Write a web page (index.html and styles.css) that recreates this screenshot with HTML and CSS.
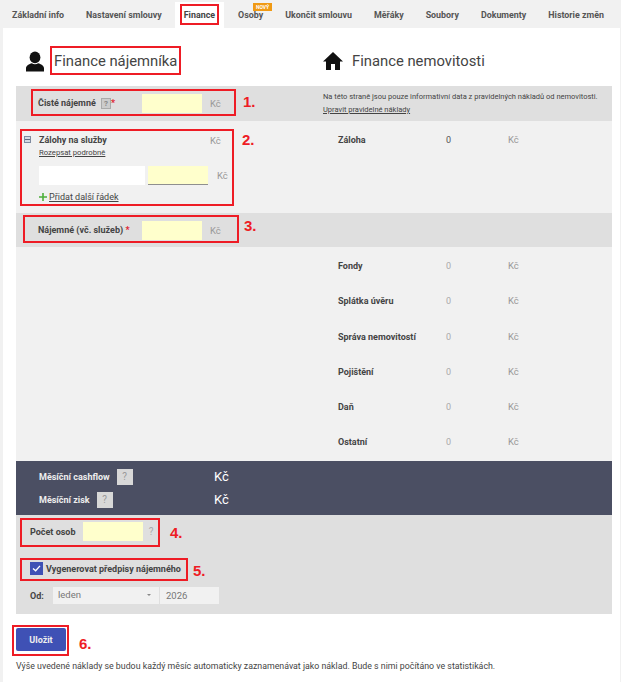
FILE: index.html
```html
<!DOCTYPE html>
<html lang="cs">
<head>
  <meta charset="UTF-8">
  <title>Finance</title>
  <link rel="stylesheet" href="styles.css">
</head>
<body>
  <!-- Tabs -->
  <nav class="tabs">
    <a class="tab" href="#">Základní info</a>
    <a class="tab" href="#">Nastavení smlouvy</a>
    <a class="tab active" href="#">Finance</a>
    <a class="tab" href="#">Osoby<span class="new-badge">NOVÝ</span></a>
    <a class="tab" href="#">Ukončit smlouvu</a>
    <a class="tab" href="#">Měřáky</a>
    <a class="tab" href="#">Soubory</a>
    <a class="tab" href="#">Dokumenty</a>
    <a class="tab" href="#">Historie změn</a>
  </nav>

  <main class="content">
    <!-- Headings -->
    <div class="headings">
      <h2 class="heading">
        <svg class="heading-icon" viewBox="0 0 20 22" width="18" height="21"><ellipse cx="10" cy="6.500" rx="6" ry="6.500" fill="#111"/><path d="M0 22v-3.500c0-3 3.500-4.500 6.500-5.500 2 1.500 5 1.500 7 0 3 1 6.500 2.500 6.500 5.500V22z" fill="#111"/></svg>
        Finance nájemníka
      </h2>
      <h2 class="heading">
        <svg class="heading-icon" viewBox="0 0 20 18" width="20" height="18"><path d="M10 0 0 9.500h3V18h5v-6h4v6h5V9.500h3z" fill="#111"/></svg>
        Finance nemovitosti
      </h2>
    </div>

    <div class="panel">
      <!-- Net rent -->
      <div class="row gray row-net">
        <div class="col">
          <span class="label">Čisté nájemné <span class="hint-small">?</span><span class="req">*</span></span>
          <input class="field" type="text">
          <span class="unit">Kč</span>
        </div>
        <div class="col note">
          <p>Na této straně jsou pouze informativní data z pravidelných nákladů od nemovitosti.</p>
          <a href="#">Upravit pravidelné náklady</a>
        </div>
      </div>

      <!-- Service advances -->
      <div class="row row-advance">
        <div class="col-stack">
          <div class="advance-head">
            <span class="collapse"></span>
            <div class="advance-title">
              <span class="label">Zálohy na služby</span>
              <a class="sub-link" href="#">Rozepsat podrobně</a>
            </div>
            <span class="unit">Kč</span>
          </div>
          <div class="advance-line">
            <input class="field-name" type="text">
            <input class="field field-lined" type="text">
            <span class="unit">Kč</span>
          </div>
          <div class="add-line">
            <svg viewBox="0 0 9 9" width="8" height="8"><path d="M3.600 0h1.800v3.600H9v1.800H5.400V9H3.600V5.400H0V3.600h3.600z" fill="#4caf3a"/></svg>
            <a href="#">Přidat další řádek</a>
          </div>
        </div>
        <div class="cost cost-first">
          <span class="cost-name">Záloha</span>
          <span class="cost-value dark">0</span>
          <span class="unit">Kč</span>
        </div>
      </div>

      <!-- Rent total -->
      <div class="row gray row-total">
        <div class="col">
          <span class="label">Nájemné (vč. služeb)<span class="req"> *</span></span>
          <input class="field" type="text">
          <span class="unit">Kč</span>
        </div>
      </div>

      <!-- Property costs -->
      <div class="costs">
        <div class="cost"><span class="cost-name">Fondy</span><span class="cost-value">0</span><span class="unit">Kč</span></div>
        <div class="cost"><span class="cost-name">Splátka úvěru</span><span class="cost-value">0</span><span class="unit">Kč</span></div>
        <div class="cost"><span class="cost-name">Správa nemovitostí</span><span class="cost-value">0</span><span class="unit">Kč</span></div>
        <div class="cost"><span class="cost-name">Pojištění</span><span class="cost-value">0</span><span class="unit">Kč</span></div>
        <div class="cost"><span class="cost-name">Daň</span><span class="cost-value">0</span><span class="unit">Kč</span></div>
        <div class="cost"><span class="cost-name">Ostatní</span><span class="cost-value">0</span><span class="unit">Kč</span></div>
      </div>

      <!-- Summary -->
      <div class="summary">
        <div class="summary-line"><span class="summary-label">Měsíční cashflow</span><span class="hint-box">?</span><span class="summary-unit">Kč</span></div>
        <div class="summary-line"><span class="summary-label">Měsíční zisk</span><span class="hint-box">?</span><span class="summary-unit">Kč</span></div>
      </div>

      <!-- Options -->
      <div class="options">
        <div class="persons">
          <span class="label">Počet osob</span>
          <input class="field" type="text">
          <span class="hint-plain">?</span>
        </div>
        <label class="check-line">
          <span class="check"><svg viewBox="0 0 10 8" width="9" height="7"><path d="M1 4l3 2.500L9 1" fill="none" stroke="#fff" stroke-width="1.600"/></svg></span>
          Vygenerovat předpisy nájemného
        </label>
        <div class="from-line">
          <span class="label">Od:</span>
          <span class="select">leden<i class="caret"></i></span>
          <span class="year">2026</span>
        </div>
      </div>
    </div>

    <button class="save" type="button">Uložit</button>
    <p class="footnote">Výše uvedené náklady se budou každý měsíc automaticky zaznamenávat jako náklad. Bude s nimi počítáno ve statistikách.</p>
  </main>

  <!-- Red annotations drawn over the screenshot -->
  <div class="mark" style="left:180px;top:4px;width:39px;height:21px"></div>
  <div class="mark" style="left:50px;top:46px;width:131px;height:29px"></div>
  <div class="mark" style="left:31px;top:89px;width:205px;height:27px"></div>
  <div class="mark" style="left:20px;top:129px;width:214px;height:77px"></div>
  <div class="mark" style="left:23px;top:215px;width:216px;height:28px"></div>
  <div class="mark" style="left:20px;top:518px;width:140px;height:29px"></div>
  <div class="mark" style="left:20px;top:558px;width:168px;height:23px"></div>
  <div class="mark" style="left:12px;top:625px;width:57px;height:31px"></div>
  <span class="mark-num" style="left:243px;top:94px">1.</span>
  <span class="mark-num" style="left:242px;top:132px">2.</span>
  <span class="mark-num" style="left:244px;top:218px">3.</span>
  <span class="mark-num" style="left:170px;top:525px">4.</span>
  <span class="mark-num" style="left:193px;top:563px">5.</span>
  <span class="mark-num" style="left:79px;top:636px">6.</span>
</body>
</html>
```

FILE: styles.css
```css
/* General */
html, body {
  margin: 0;
  padding: 0;
}

body {
  position: relative;
  height: 682px;
  overflow: hidden;
  background: #f1f1f1;
  font-family: Roboto, sans-serif;
  font-size: 9px;
  color: #444;
}

a {
  color: inherit;
}

input {
  box-sizing: border-box;
  margin: 0;
  border: none;
  border-radius: 0;
  outline: none;
}

/* Tabs */
.tabs {
  display: flex;
  height: 28px;
  padding-left: 1px;
}

.tab {
  position: relative;
  padding: 0 11px;
  margin-top: 2px;
  line-height: 26px;
  font-size: 8.900px;
  font-weight: 700;
  color: #555;
  text-decoration: none;
  white-space: nowrap;
}

.tab.active {
  margin-left: 2px;
  margin-right: 3px;
  padding: 0 9px;
  background: #fff;
  color: #444;
}

.new-badge {
  position: absolute;
  left: 26px;
  top: 1px;
  width: 19px;
  height: 8px;
  background: #f09a14;
  color: #fff;
  font-size: 5px;
  line-height: 8px;
  text-align: center;
}

/* Content */
.content {
  margin: 0 1px 0 3px;
  height: 654px;
  padding: 0 8px 0 13px;
  background: #fff;
}

.headings {
  display: flex;
  height: 58px;
}

.heading {
  display: flex;
  align-items: center;
  width: 298px;
  margin: 0;
  padding: 8px 0 0 10px;
  box-sizing: border-box;
  font-size: 14.800px;
  font-weight: 400;
  color: #444;
  gap: 10px;
}

.heading + .heading {
  padding-left: 9px;
  gap: 9px;
}

.heading-icon {
  flex: none;
}

/* Panel */
.panel {
  background: #f1f1f1;
}

.row {
  display: flex;
}

.gray {
  background: #dfdfdf;
}

.row-net {
  height: 35px;
}

.row-total {
  height: 34px;
}

.row-advance {
  height: 92px;
}

.col {
  display: flex;
  align-items: center;
  width: 307px;
  padding-left: 22px;
  box-sizing: border-box;
}

.label {
  font-weight: 700;
  color: #444;
}

.col .label {
  width: 104px;
  flex: none;
}

.req {
  color: #e0202e;
}

.hint-small {
  display: inline-block;
  width: 8px;
  height: 9px;
  margin: 0 0 0 3px;
  border: 1px solid #aaa;
  background: #ccc;
  color: #888;
  font-size: 8px;
  line-height: 9px;
  text-align: center;
  vertical-align: middle;
}

.field {
  width: 60px;
  height: 19px;
  background: #ffffcc;
  flex: none;
}

.unit {
  color: #999;
  font-size: 9.500px;
}

.col .unit {
  margin-left: 8px;
}

/* Advances */
.col-stack {
  width: 307px;
  padding: 14px 0 0 8px;
  box-sizing: border-box;
}

.advance-head {
  display: flex;
  align-items: flex-start;
}

.collapse {
  width: 7px;
  height: 7px;
  margin: 1px 8px 0 0;
  border: 1px solid #7f8ba0;
  background: linear-gradient(#5f6b80, #5f6b80) center / 5px 1px no-repeat, #d4dae3;
  box-sizing: border-box;
}

.advance-title {
  width: 171px;
}

.sub-link {
  display: block;
  margin-top: 3px;
  font-size: 7.700px;
}

.advance-line {
  display: flex;
  align-items: center;
  margin: 9px 0 0 15px;
}

.field-name {
  width: 106px;
  height: 19px;
  margin-right: 3px;
  background: #fff;
}

.field-lined {
  border-bottom: 1px solid #8f8f8f;
}

.advance-line .unit {
  margin-left: 9px;
}

.add-line {
  display: flex;
  align-items: center;
  gap: 2px;
  margin: 7px 0 0 15px;
  font-size: 9px;
}

/* Costs */
.costs {
  height: 214px;
  padding-top: 14px;
  box-sizing: border-box;
}

.cost {
  display: flex;
  align-items: flex-start;
  height: 35.300px;
  padding-left: 322px;
  box-sizing: border-box;
}

.cost .unit {
  margin-top: -1px;
}

.cost-first {
  padding: 14px 0 0 15px;
}

.cost-name {
  width: 108px;
  flex: none;
  font-weight: 700;
  color: #444;
}

.cost-value {
  width: 62px;
  flex: none;
  color: #aaa;
}

.cost-value.dark {
  color: #555;
}

/* Summary */
.summary {
  display: flex;
  flex-direction: column;
  justify-content: center;
  gap: 7px;
  height: 54px;
  padding-left: 23px;
  box-sizing: border-box;
  background: #4b4f63;
}

.summary-line {
  display: flex;
  align-items: center;
  position: relative;
  height: 16px;
}

.summary-label {
  margin-right: 7px;
  font-weight: 700;
  color: #eee;
}

.hint-box {
  width: 16px;
  height: 16px;
  background: #d8d8d8;
  color: #999;
  font-size: 10px;
  line-height: 16px;
  text-align: center;
}

.summary-unit {
  position: absolute;
  left: 175px;
  font-size: 13px;
  color: #fff;
}

/* Options */
.options {
  height: 99px;
  padding: 7px 0 0 14px;
  box-sizing: border-box;
  background: #dfdfdf;
}

.persons {
  display: flex;
  align-items: center;
  height: 19px;
}

.persons .label {
  width: 53px;
}

.hint-plain {
  width: 16px;
  color: #aaa;
  font-size: 10px;
  text-align: center;
}

.check-line {
  display: flex;
  align-items: center;
  gap: 3px;
  margin-top: 21px;
  font-weight: 700;
  color: #444;
}

.check {
  display: flex;
  align-items: center;
  justify-content: center;
  width: 13px;
  height: 13px;
  background: #3f51b5;
}

.from-line {
  display: flex;
  align-items: center;
  margin-top: 12px;
}

.from-line .label {
  width: 23px;
}

.select {
  display: flex;
  justify-content: space-between;
  align-items: center;
  width: 106px;
  height: 17px;
  padding: 0 8px 2px 5px;
  box-sizing: border-box;
  background: #f1f1f1;
  color: #777;
  font-size: 9.500px;
}

.caret {
  width: 0;
  height: 0;
  border: 2px solid transparent;
  border-top: 2px solid #888;
  margin-top: 3px;
}

.year {
  width: 59px;
  height: 17px;
  margin-left: 1px;
  padding-left: 6px;
  box-sizing: border-box;
  background: #f1f1f1;
  color: #777;
  font-size: 9.500px;
  line-height: 17px;
}

/* Bottom */
.save {
  display: block;
  width: 50px;
  height: 23px;
  margin: 14px 0 0 0;
  border: none;
  border-radius: 2px;
  background: #3f51b5;
  color: #eee;
  font-family: inherit;
  font-size: 9px;
  font-weight: 700;
}

.footnote {
  margin: 10px 0 0 0;
  font-size: 8.800px;
  white-space: nowrap;
  color: #444;
}

/* Note in the first row */
.note {
  display: block;
  width: auto;
  padding: 6px 0 0 0;
  font-size: 7.500px;
}

.note p {
  margin: 0 0 4px;
  white-space: nowrap;
}

/* Annotations */
.mark {
  position: absolute;
  box-sizing: border-box;
  border: 2px solid #ee1c25;
}

.mark-num {
  position: absolute;
  color: #ee1c25;
  font-family: "Liberation Sans", sans-serif;
  font-size: 15px;
  font-weight: 700;
  line-height: 16px;
}
```
